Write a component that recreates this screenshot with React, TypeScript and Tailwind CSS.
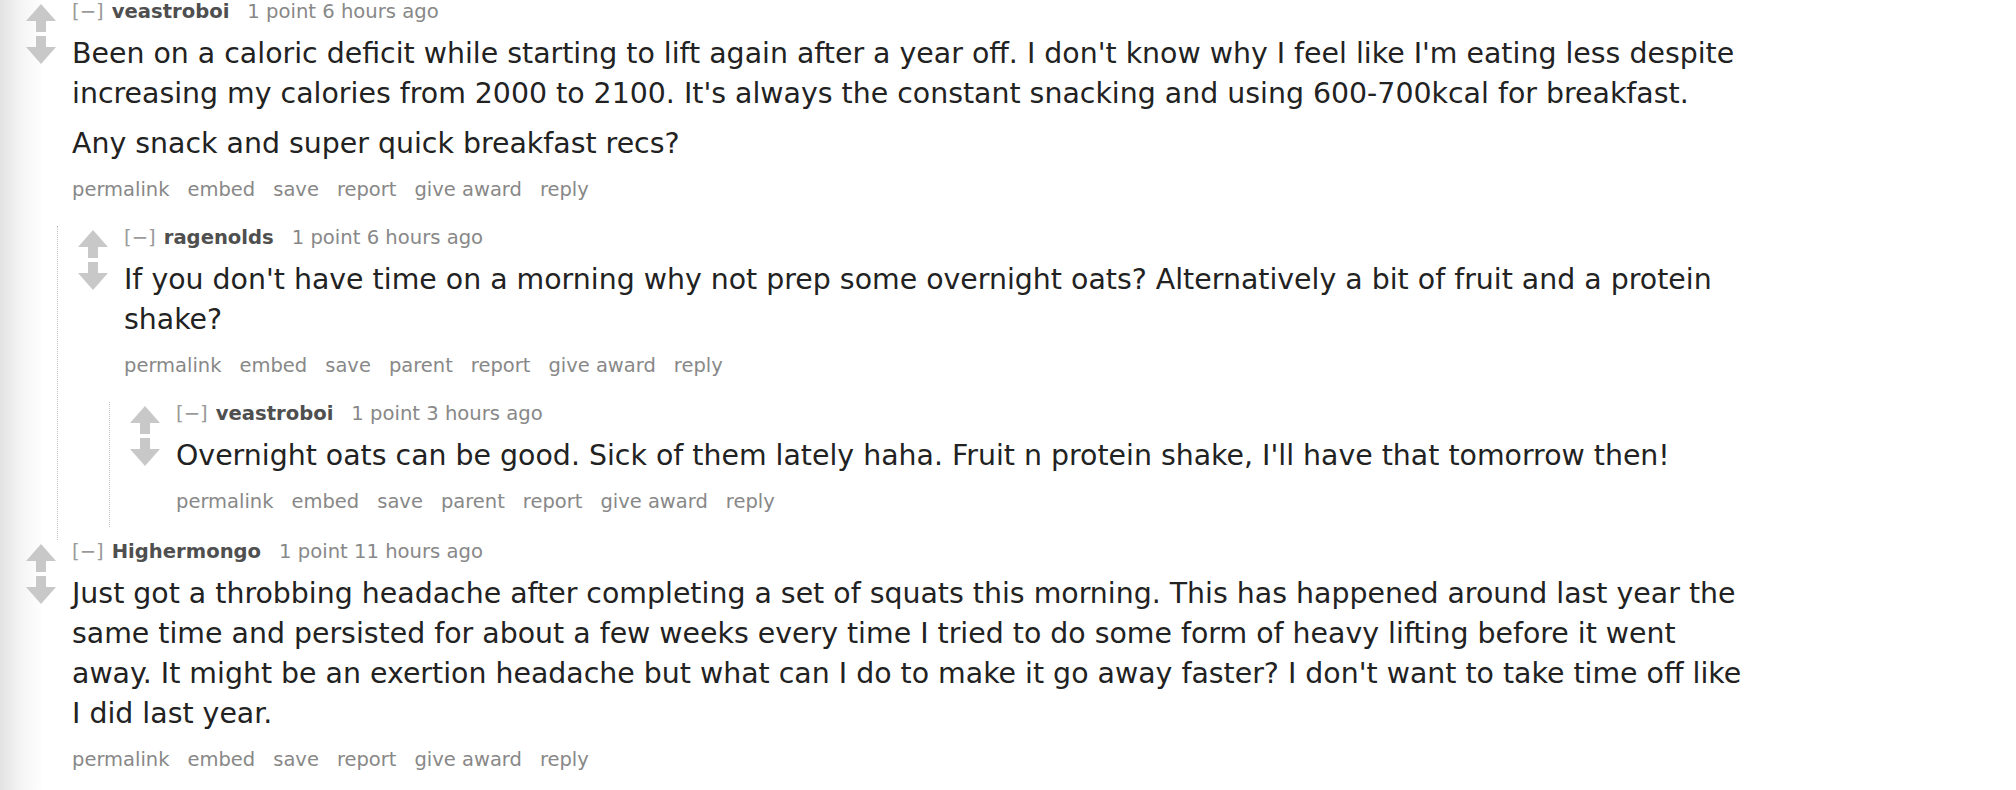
import React from 'react';

// Old-style threaded comment list
type CommentData = {
  id: string;
  author: string;
  meta: string;
  paragraphs: string[];
  child?: boolean;
  replies?: CommentData[];
};

const comments: CommentData[] = [
  {
    id: 'c1',
    author: 'veastroboi',
    meta: '1 point 6 hours ago',
    paragraphs: [
      "Been on a caloric deficit while starting to lift again after a year off. I don't know why I feel like I'm eating less despite increasing my calories from 2000 to 2100. It's always the constant snacking and using 600-700kcal for breakfast.",
      'Any snack and super quick breakfast recs?',
    ],
    replies: [
      {
        id: 'c2',
        author: 'ragenolds',
        meta: '1 point 6 hours ago',
        child: true,
        paragraphs: [
          "If you don't have time on a morning why not prep some overnight oats? Alternatively a bit of fruit and a protein shake?",
        ],
        replies: [
          {
            id: 'c3',
            author: 'veastroboi',
            meta: '1 point 3 hours ago',
            child: true,
            paragraphs: [
              "Overnight oats can be good. Sick of them lately haha. Fruit n protein shake, I'll have that tomorrow then!",
            ],
          },
        ],
      },
    ],
  },
  {
    id: 'c4',
    author: 'Highermongo',
    meta: '1 point 11 hours ago',
    paragraphs: [
      "Just got a throbbing headache after completing a set of squats this morning. This has happened around last year the same time and persisted for about a few weeks every time I tried to do some form of heavy lifting before it went away. It might be an exertion headache but what can I do to make it go away faster? I don't want to take time off like I did last year.",
    ],
  },
];

const Arrows = () => (
  <div className="flex flex-col gap-[4px] w-[30px] mt-[4px] shrink-0">
    <svg width="30" height="28" viewBox="0 0 30 28">
      <path d="M15 0 L30 17 L20 17 L20 28 L10 28 L10 17 L0 17 Z" fill="#c8c8c8" />
    </svg>
    <svg width="30" height="28" viewBox="0 0 30 28">
      <path d="M10 0 L20 0 L20 11 L30 11 L15 28 L0 11 L10 11 Z" fill="#c8c8c8" />
    </svg>
  </div>
);

const Comment = ({ data }: { data: CommentData }) => {
  const actions = data.child
    ? ['permalink', 'embed', 'save', 'parent', 'report', 'give award', 'reply']
    : ['permalink', 'embed', 'save', 'report', 'give award', 'reply'];

  return (
    <div>
      <div className="flex">
        <Arrows />
        <div className="ml-[16px] flex-1">
          <p className="leading-[24px] text-[19.6px] whitespace-nowrap">
            <span className="text-[#999] mr-[8px]">[−]</span>
            <span className="font-bold text-[#4f4f4f]">{data.author}</span>
            <span className="text-[#888] ml-[18px]">{data.meta}</span>
          </p>
          <div className="mt-[10px] space-y-[10px] text-[28.4px] leading-[40px] text-[#222]">
            {data.paragraphs.map((p, i) => (
              <p key={i}>{p}</p>
            ))}
          </div>
          <ul className="mt-[14px] flex gap-[18px] text-[19.5px] leading-[24px] text-[#888]">
            {actions.map((a) => (
              <li key={a}>{a}</li>
            ))}
          </ul>
        </div>
      </div>
      {data.replies && (
        <div className="mt-[24px] ml-[31px] pb-[13px] pl-[20px] border-l border-dotted border-[#c4c4c4]">
          {data.replies.map((r) => (
            <Comment key={r.id} data={r} />
          ))}
        </div>
      )}
    </div>
  );
};

export default function App() {
  return (
    <div
      className="min-h-screen bg-[linear-gradient(to_right,#e2e2e2,#f4f4f4_20px,#ffffff_44px)]"
      style={{ fontFamily: '"DejaVu Sans", Verdana, sans-serif' }}
    >
      <div className="w-[1750px] pl-[26px]">
        {comments.map((c) => (
          <Comment key={c.id} data={c} />
        ))}
      </div>
    </div>
  );
}
